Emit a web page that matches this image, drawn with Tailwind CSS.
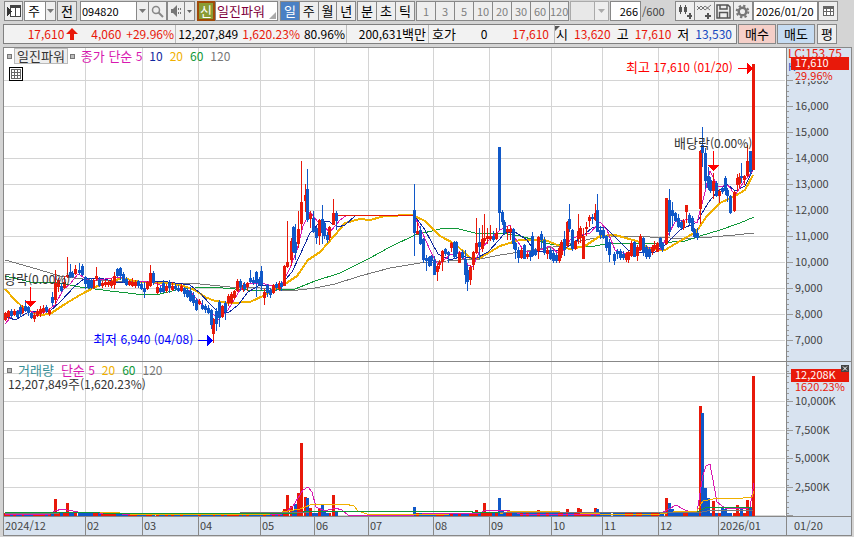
<!DOCTYPE html>
<html lang="ko">
<head>
    <meta charset="UTF-8">
    <meta name="viewport" content="width=device-width, initial-scale=1.0">
    <title>일진파워 - 종합차트</title>
    <script src="https://cdn.jsdelivr.net/npm/@tailwindcss/browser@4"></script>
</head>
<body class="min-h-screen overflow-hidden bg-[#d4d4d4] font-['Noto_Sans_CJK_KR',sans-serif] text-[13px] leading-4 text-black">

    <!-- 툴바 -->
    <header class="flex h-[21px] items-stretch whitespace-nowrap pt-px pl-1">
        <button aria-label="패널" class="flex w-[19px] items-center justify-center border border-[#888] bg-[#eee]">
            <svg width="15" height="14" viewBox="0 0 15 14" shape-rendering="crispEdges"><path d="M4 1h10v11H4z" fill="#fff" stroke="#444"/><path d="M4 2h10v2H4zM9 2h1v10H9z" fill="#444"/><path d="M1 3v9l5-4z" fill="#333"/></svg>
        </button>
        <div class="relative ml-px w-8">
            <select aria-label="종목구분" class="h-full w-full appearance-none border border-[#888] bg-white pl-[3px]"><option>주</option></select>
            <span class="pointer-events-none absolute inset-y-px right-px flex w-2.5 items-center justify-center border-l border-[#888] bg-[#eee]"><svg width="7" height="4"><path d="M0 0h7L3.500 4z" fill="#777"/></svg></span>
        </div>
        <button class="ml-px w-5 border border-[#888] bg-[#e6e6e6]">전</button>
        <input aria-label="종목코드" value="094820" class="ml-[3px] w-[57px] border border-[#888] bg-white pl-px text-[11px]">
        <button aria-label="종목코드 목록" class="flex w-[11px] items-center justify-center border-y border-[#888] bg-[#eee]"><svg width="7" height="4"><path d="M0 0h7L3.500 4z" fill="#777"/></svg></button>
        <button aria-label="검색" class="flex w-[19px] items-center justify-center border border-[#888] bg-[#eee]">
            <svg width="13" height="13" viewBox="0 0 13 13" fill="none" stroke="#888"><circle cx="5" cy="5" r="3.500" stroke-width="1.500"/><path d="M7.500 7.500L12 12" stroke-width="2"/></svg>
        </button>
        <button aria-label="음성" class="flex w-[18px] items-center justify-center border border-[#888] bg-[#eee]">
            <svg width="13" height="12" viewBox="0 0 13 12" fill="#777"><path d="M1 4h2l4-4v12L3 8H1z"/><path d="M8 3h1v2H8zM10 3h1v2h-1zM8 7h1v2H8zM10 7h1v2h-1z"/></svg>
        </button>
        <button aria-label="음성 설정" class="flex w-[10px] items-center justify-center border-y border-r border-[#888] bg-[#eee]"><svg width="5" height="3"><path d="M0 0h5L2.500 3z" fill="#666"/></svg></button>
        <button class="ml-0.5 w-[18px] border-2 border-[#a04a08] bg-[#8a9c34] text-white">신</button>
        <button class="relative w-[63px] border border-[#888] bg-white pl-px text-left text-[#80003c]">일진파워<svg class="absolute right-px bottom-px" width="7" height="7"><path d="M7 0v7H0z" fill="#aaa"/></svg></button>

        <div class="ml-0.5 flex w-[76px] divide-x divide-[#888] border border-[#888] bg-[#eee]">
            <button class="flex-1 bg-[#4a80c4] text-white">일</button>
            <button class="flex-1">주</button>
            <button class="flex-1">월</button>
            <button class="flex-1">년</button>
        </div>
        <div class="ml-px flex w-[58px] divide-x divide-[#888] border border-[#888] bg-[#eee]">
            <button class="flex-1">분</button>
            <button class="flex-1">초</button>
            <button class="flex-1">틱</button>
        </div>
        <div class="ml-px flex w-[153px] divide-x divide-[#888] border border-[#888] bg-[#eee] text-[11px] text-[#808080]">
            <button class="w-0 flex-1">1</button>
            <button class="w-0 flex-1">3</button>
            <button class="w-0 flex-1">5</button>
            <button class="w-0 flex-1">10</button>
            <button class="w-0 flex-1">20</button>
            <button class="w-0 flex-1">30</button>
            <button class="w-0 flex-1">60</button>
            <button class="w-0 flex-1">120</button>
        </div>
        <div class="relative ml-px w-[39px]">
            <select aria-label="주기" disabled class="h-full w-full appearance-none border border-[#aaa] bg-[#e8e8e8]"><option></option></select>
            <span class="pointer-events-none absolute inset-y-px right-px flex w-3.5 items-center justify-center border-l border-[#aaa] bg-[#eee]"><svg width="7" height="4"><path d="M0 0h7L3.500 4z" fill="#aaa"/></svg></span>
        </div>
        <input aria-label="표시 개수" value="266" class="ml-px w-[31px] border border-[#888] bg-white pr-0.5 text-right text-[11px]">
        <span class="w-[34px] self-center pl-px text-[11px] text-[#444]">/600</span>
        <div class="flex w-[78px] divide-x divide-[#888] border border-[#888] bg-[#eee]">
            <button aria-label="캔들" class="flex flex-1 items-center justify-center"><svg width="15" height="15" viewBox="0 0 15 15" shape-rendering="crispEdges" fill="#555"><path d="M1 3h3v5H1zM2 1h1v9H2zM6 3h3v5H6zM7 1h1v9H7zM9 11h5v2H9zM11 9h2v6h-2z"/></svg></button>
            <button aria-label="지표" class="flex flex-1 items-center justify-center"><svg width="15" height="15" viewBox="0 0 15 15" fill="none" stroke="#555"><path d="M0 6l4-4 4 4 6-5M0 2l4 4 4-4 5 4" stroke-width=".8"/><path d="M8 12h6M11 9v6" stroke-width="2"/></svg></button>
            <button aria-label="저장" class="flex flex-1 items-center justify-center"><svg width="15" height="15" viewBox="0 0 15 15" fill="none" stroke="#555" stroke-width="1.500"><path d="M1 1h11l2 2v11H1zM4 1v4h7V1M3.500 14V8.500h8V14"/></svg></button>
            <button aria-label="설정" class="flex flex-1 items-center justify-center"><svg width="15" height="15" viewBox="0 0 15 15" fill="none" stroke="#777"><circle cx="7.500" cy="7.500" r="3.800" stroke-width="2.500"/><circle cx="7.500" cy="7.500" r="5.800" stroke-width="2" stroke-dasharray="2.300 2.250"/></svg></button>
        </div>
        <input aria-label="기준일" value="2026/01/20" class="w-[65px] border border-[#888] bg-white pl-0.5 text-[11px]">
        <button aria-label="달력" class="flex w-5 items-center justify-center border border-[#888] bg-[#eee]">
            <svg width="11" height="10" viewBox="0 0 11 10" shape-rendering="crispEdges"><path d="M0 0h11v10H0z" fill="#666"/><path d="M1 3h2v2H1zM4 3h3v2H4zM8 3h2v2H8zM1 6h2v3H1zM4 6h3v3H4zM8 6h2v3H8z" fill="#fff"/></svg>
        </button>
    </header>

    <!-- 시세 -->
    <section class="mt-[3px] flex h-5 pl-[3px] whitespace-nowrap">
        <div class="flex w-[734px] items-center border border-[#808080] bg-[#f2f2f2] text-[12px]">
            <div class="flex h-full w-[172px] items-center justify-end gap-[5px] border-r border-[#bbb] pr-px text-[#e8190a]">
                <span class="flex items-center gap-0.5">17,610<svg width="12" height="12"><path d="M6 0l6 6H8v6H4V6H0z" fill="#e8190a"/></svg></span>
                <span class="ml-2">4,060</span>
                <span>+29.96%</span>
            </div>
            <div class="flex h-full w-[171px] items-center justify-end gap-1 border-r border-[#bbb] pr-px">
                <span>12,207,849</span>
                <span class="text-[#e8190a]">1,620.23%</span>
                <span>80.96%</span>
            </div>
            <div class="flex h-full w-[82px] items-center justify-end border-r border-[#bbb] pr-0.5">200,631<span class="text-[13px]">백만</span></div>
            <div class="flex h-full w-[126px] items-center justify-between border-r border-[#bbb] pr-[5px] pl-[3px]">
                <span class="text-[13px]">호가</span>
                <span>0</span>
                <span class="text-[#e8190a]">17,610</span>
            </div>
            <div class="relative flex h-full flex-1 items-center justify-between pr-1 pl-px">
                <svg class="absolute top-px left-0" width="5" height="5"><path d="M0 0h5L0 5z" fill="#555"/></svg>
                <span class="text-[13px]">시</span>
                <span class="text-[#e8190a]">13,620</span>
                <span class="text-[13px]">고</span>
                <span class="text-[#e8190a]">17,610</span>
                <span class="text-[13px]">저</span>
                <span class="text-[#1448c0]">13,530</span>
            </div>
        </div>
        <button class="ml-px w-[38px] border border-[#888] bg-[#f5cfc8]">매수</button>
        <button class="ml-px w-[38px] border border-[#888] bg-[#c6dcf2]">매도</button>
        <button class="ml-0.5 w-5 border border-[#888] bg-[#eee]">평</button>
    </section>

    <!-- 차트 -->
    <main class="mt-[3px] mr-0.5 ml-[3px] border border-[#888] bg-white">
        <div class="flex h-[468px]">
            <div class="relative min-w-0 flex-1">
                <svg id="plot" class="block h-full w-full" viewBox="4 48 782 468" preserveAspectRatio="none" shape-rendering="crispEdges" fill="none">
                    <path stroke="#d4d4d4" d="M4 80.500H785M4 106.500H785M4 132.500H785M4 158.500H785M4 184.500H785M4 210.500H785M4 236.500H785M4 262.500H785M4 288.500H785M4 314.500H785M4 340.500H785M4 373.500H785M4 401.500H785M4 430.500H785M4 458.500H785M4 487.500H785M4 515.500H785"/>
                    <path stroke="#d4d4d4" d="M85.500 48V516M142.500 48V516M198.500 48V516M260.500 48V516M314.500 48V516M368.500 48V516M433.500 48V516M489.500 48V516M551.500 48V516M602.500 48V516M658.500 48V516M718.500 48V516"/>
                    <path stroke="#888" d="M4 361.500H786"/>
                    <g id="averages" stroke-linejoin="round">
                        <polyline stroke="#777" points="5,260 30,267 60,276 90,280 110,281 160,283 200,284 230,287 260,288 290,291 315,288 335,284 360,276 390,268 420,263 460,260 480,259 500,255 520,252 560,246 590,239 610,236 650,237 670,238 695,238 712,237 735,235 754,233"/>
                        <polyline stroke="#109838" points="5,276 30,282 60,283 80,287 110,291 145,295 160,294 180,289 210,287 260,291 295,289 315,281 340,273 370,258 390,247 415,235 440,229 455,228 475,233 500,233 520,236 550,244 590,247 605,244 640,243 660,243 685,241 700,236 720,230 740,223 754,217"/>
                        <polyline stroke="#f0b000" stroke-width="2" points="5,289 15,300 25,309 32,312 40,315 50,314 65,304 80,295 95,287 110,282 122,278 140,282 165,283 180,285 195,290 205,297 215,301 230,303 250,302 265,295 285,284 297,276 308,260 320,252 335,235 345,223 360,219 370,220 385,216 412,215 425,221 440,236 455,244 465,253 470,258 480,258 490,252 500,246 520,240 545,240 560,246 570,249 585,246 600,236 615,235 640,242 650,249 665,250 680,241 696,232 707,216 720,203 735,196 745,190 753,175"/>
                        <polyline stroke="#1028a0" points="5,316 15,320 22,316 30,311 50,311 60,302 75,286 85,278 100,278 120,283 160,281 190,285 200,293 210,304 218,312 228,313 238,305 248,292 260,285 280,286 292,272 300,255 310,233 320,222 328,221 338,227 345,225 355,216 414,215 425,230 438,254 450,260 462,256 475,259 488,252 500,239 505,232 515,232 527,240 535,252 550,251 562,250 575,242 592,228 605,227 615,237 628,250 640,253 655,252 665,245 680,230 697,222 708,203 717,192 727,184 735,191 745,186 753,170"/>
                        <polyline stroke="#d818b0" points="5,324 15,312 25,309 35,313 45,312 55,305 63,290 70,284 78,274 90,281 120,277 130,283 150,281 165,287 190,291 200,303 210,310 218,320 228,310 240,290 250,283 262,283 275,287 283,282 290,268 297,250 303,226 310,212 318,222 330,232 340,220 347,215 414,215 422,232 430,250 438,265 450,255 460,252 468,265 473,267 480,250 490,239 500,230 510,225 515,238 525,252 540,250 550,246 560,255 570,240 578,236 590,233 600,222 607,230 615,250 630,255 640,250 650,247 660,250 668,235 675,222 690,219 697,223 703,200 710,171 718,187 728,185 735,195 745,180 753,171"/>
                    </g>
                    <path stroke="#e8190a" d="M337 215.500H413"/>
                    <path id="up" fill="#e8190a"/>
                    <path id="down" fill="#1058c8"/>
                    <g>
                        <polyline stroke="#d818b0" points="5,514 50,514 55,511 62,509 78,512 120,514 280,515 287,511 293,506 298,498 303,490 308,487 312,492 316,507 325,511 335,508 342,510 348,515 414,515 430,513 480,513 486,510 510,511 520,514 660,514 669,509 676,505 683,509 690,512 697,512 703,475 706,466 710,464 717,502 725,508 745,509 750,507 754,483"/>
                        <polyline stroke="#f0b000" points="5,514 76,512 110,512 130,514 270,514 300,509 310,505 330,504 345,504 354,506 358,511 370,515 450,514 500,514 510,511 540,511 600,514 660,514 680,511 697,511 703,501 718,498 735,499 752,497 754,491"/>
                        <polyline stroke="#109838" points="5,512 70,512 100,513 290,514 310,511 465,511 480,513 600,512 697,512 705,508 753,507"/>
                        <polyline stroke="#777" points="5,514 60,513 240,513 310,512 500,512 697,513 712,510 753,510"/>
                    </g>
                    <!-- 최고/최저, 배당락 화살표 -->
                    <path fill="#f00" d="M738 68h9v-5l6 5.500-6 5.500v-5h-9zM30 287h1v14h5l-5.500 6-5.500-6h5zM713 151h1v14h5l-5.500 6-5.500-6h5z"/>
                    <path fill="#00f" d="M198 340h9v-5l6 5.500-6 5.500v-5h-9z"/>
                </svg>

                <!-- 범례 -->
                <div class="absolute top-0 left-[3px] flex items-center">
                    <span class="size-[5px] border border-[#777] bg-[#bbb]"></span>
                    <span class="mx-0.5 border border-[#bbb] bg-[#eee] px-0.5 leading-[14px] text-[#333]">일진파워</span>
                    <span class="size-[5px] border border-[#777] bg-[#bbb]"></span>
                    <div class="ml-1.5 flex items-baseline gap-[7px] text-[12px]">
                        <span class="text-[#d818b0]"><span class="text-[13px]">종가 단순</span> 5</span>
                        <span class="text-[#1028a0]">10</span>
                        <span class="text-[#f0b000]">20</span>
                        <span class="text-[#109838]">60</span>
                        <span class="text-[#777]">120</span>
                    </div>
                </div>
                <button aria-label="표 보기" class="absolute top-[19px] left-[5px] size-3.5 border border-black bg-white p-px">
                    <svg width="10" height="10" shape-rendering="crispEdges"><path d="M.5.500h9v9h-9zM0 3.500h10M0 6.500h10M3.500 0v10M6.500 0v10" fill="none" stroke="#666"/></svg>
                </button>
                <div class="absolute top-[11px] right-[6.800%] text-[12px] text-[#f00]"><span class="text-[13px]">최고</span> 17,610 (01/20)</div>
                <div class="absolute top-[283px] left-[11.400%] text-[12px] text-[#00f]"><span class="text-[13px]">최저</span> 6,940 (04/08)</div>
                <div class="absolute top-[223px] left-0 text-[12px] text-[#333]"><span class="text-[13px]">당락</span>(0.00%)</div>
                <div class="absolute top-[87px] right-[4.300%] text-[12px] text-[#333]"><span class="text-[13px]">배당락</span>(0.00%)</div>

                <div class="absolute top-[314px] left-[3px] flex items-center">
                    <span class="size-[5px] border border-[#777] bg-[#bbb]"></span>
                    <div class="ml-1.5 flex items-baseline gap-[7px] text-[12px]">
                        <span class="text-[13px] text-[#389098]">거래량</span>
                        <span class="text-[#d818b0]"><span class="text-[13px]">단순</span> 5</span>
                        <span class="text-[#f0b000]">20</span>
                        <span class="text-[#109838]">60</span>
                        <span class="text-[#777]">120</span>
                    </div>
                </div>
                <div class="absolute top-[328px] left-1 text-[12px] text-[#333]">12,207,849<span class="text-[13px]">주</span>(1,620.23%)</div>
            </div>

            <!-- 가격축 -->
            <svg id="axis" class="block h-full w-[65px] shrink-0 border-l border-[#888] bg-[#d8e3f0]" viewBox="787 48 64 468" font-size="11" fill="#444">
                <path id="ticks" stroke="#999" fill="none" shape-rendering="crispEdges"/>
                <path stroke="#888" d="M787 361.500h64" shape-rendering="crispEdges"/>
                <g id="labels"></g>
                <path d="M793 70h56v11h-56z" fill="#d8e3f0"/>
                <text x="788" y="58" font-size="12" fill="#e8190a">LC:153.75</text>
                <text x="788" y="71" fill="#1058c8">H</text>
                <text x="795" y="80" fill="#e8190a">29.96%</text>
                <path d="M791 57h58v13h-58zM791 369h58v13h-58z" fill="#e8190a"/>
                <text x="795" y="67" fill="#fff">17,610</text>
                <text x="795" y="379" fill="#fff">12,208K</text>
                <text x="795" y="391" fill="#e8190a">1620.23%</text>
                <path d="M841 365h8v7h-8z" fill="#444"/>
                <path d="M843 366.500l4 4m0-4l-4 4" stroke="#fff"/>
            </svg>
        </div>

        <!-- 날짜축 -->
        <div class="flex h-[19px] border-t border-[#888] bg-[#d8e3f0] text-[11px] leading-4 text-[#444]">
            <div class="grid flex-1 grid-cols-[81fr_57fr_56fr_62fr_54fr_54fr_65fr_56fr_62fr_51fr_56fr_60fr_68fr] whitespace-nowrap">
                <span class="pl-px">2024/12</span>
                <span class="border-l border-[#888] pl-px">02</span>
                <span class="border-l border-[#888] pl-px">03</span>
                <span class="border-l border-[#888] pl-px">04</span>
                <span class="border-l border-[#888] pl-px">05</span>
                <span class="border-l border-[#888] pl-px">06</span>
                <span class="border-l border-[#888] pl-px">07</span>
                <span class="border-l border-[#888] pl-px">08</span>
                <span class="border-l border-[#888] pl-px">09</span>
                <span class="border-l border-[#888] pl-px">10</span>
                <span class="border-l border-[#888] pl-px">11</span>
                <span class="border-l border-[#888] pl-px">12</span>
                <span class="border-l border-[#888] pl-px">2026/01</span>
            </div>
            <span class="w-[65px] border-l border-[#888] pl-[7px]">01/20</span>
        </div>
    </main>

    <script>
        // 봉 데이터: x, 고가, 몸통 위, 몸통 아래, 저가
        const upCandles = [
            [5,312,313,319,320],[8,310,311,316,318],[14,309,311,314,315],[22,305,308,312,313],[34,312,315,318,321],[37,309,311,315,316],[40,306,309,313,316],[43,305,308,311,313],[49,308,310,313,315],
            [55,270,283,299,303],[58,278,280,286,291],[64,276,282,287,288],[67,257,275,276,277],[75,265,269,273,274],[93,279,280,287,288],[96,267,276,278,280],[102,281,283,285,287],[105,280,282,284,286],[108,280,282,284,286],[111,278,281,285,287],[114,272,276,284,288],
            [129,280,281,284,285],[132,278,282,285,286],[135,280,282,285,287],[147,281,282,288,289],[150,265,273,285,286],[157,282,287,292,293],[166,284,286,290,292],[172,282,286,289,290],[181,284,286,290,291],[199,299,301,303,304],
            [213,318,319,333,342],[222,305,306,316,317],[228,294,296,302,305],[231,292,294,302,303],[234,290,291,297,298],[237,279,281,290,291],[243,283,285,289,291],[247,282,283,286,290],[264,289,292,297,304],[273,284,285,292,293],[279,281,283,288,290],
            [284,265,266,285,285],[287,221,262,266,267],[291,238,241,259,265],[298,211,229,243,247],[301,161,202,223,229],[305,184,195,200,211],[310,211,214,218,227],[319,219,220,235,244],[329,226,227,237,240],[333,199,213,224,224],
            [417,222,231,233,234],[437,264,266,271,280],[439,260,262,264,268],[442,250,251,261,270],[451,242,243,247,251],[459,251,253,262,262],[470,265,267,279,284],[473,251,252,264,269],[476,218,243,252,253],[482,225,239,248,251],[484,214,238,240,243],[487,228,236,238,243],[490,225,236,238,240],[496,228,233,238,239],
            [507,226,229,231,239],[510,226,229,231,239],[521,248,250,257,258],[527,252,254,256,258],[538,236,237,250,258],[547,248,250,253,258],[559,246,248,260,262],[561,240,242,254,257],[567,221,222,245,246],[575,240,241,248,249],[578,214,231,238,243],[580,226,228,237,242],[583,228,236,258,258],[586,222,227,228,235],[589,215,217,220,226],[595,204,213,219,220],
            [626,252,254,259,261],[628,251,252,259,262],[631,241,243,255,256],[637,245,247,255,260],[640,234,236,249,250],[652,245,247,251,254],[654,241,245,248,250],[657,242,243,251,251],[666,198,198,243,244],[683,219,221,227,229],[686,205,205,211,222],
            [700,150,151,208,223],[713,173,181,190,198],[719,189,191,195,202],[734,191,192,210,211],[737,174,178,184,190],[739,173,177,183,187],[744,175,176,179,184],[747,145,161,175,176],[753,64,64,169,169]
        ];
        const downCandles = [
            [11,309,311,315,317],[17,310,311,316,317],[20,305,307,313,316],[25,300,306,310,311],[28,306,307,312,315],[31,312,313,317,318],[46,305,307,310,312],[52,292,297,302,305],[61,283,286,290,291],[70,264,272,276,277],[72,271,273,276,277],[79,263,270,272,274],[82,264,266,274,275],[85,276,277,283,288],[88,278,280,287,288],[91,278,280,287,288],[99,277,280,285,286],
            [117,268,269,275,276],[120,267,268,275,279],[123,272,274,281,282],[126,277,279,284,285],[138,280,281,285,287],[141,282,284,288,289],[144,282,288,291,297],[153,271,273,282,284],[160,286,288,291,292],[163,280,283,291,292],[169,280,283,287,292],[175,284,286,288,290],[178,285,288,290,291],[184,287,288,293,296],[187,288,290,296,297],[190,287,291,300,301],[193,292,295,302,305],[196,298,300,309,310],
            [202,300,305,308,309],[205,304,306,309,312],[208,305,308,312,313],[211,309,310,324,328],[216,308,311,323,330],[219,300,302,317,326],[225,301,303,311,319],[240,279,281,286,290],[244,282,284,288,290],[250,270,278,281,282],[253,277,280,282,284],[256,271,272,282,296],[259,277,279,284,285],[261,266,271,284,289],[267,284,285,292,296],[270,288,290,294,297],[276,282,284,287,290],[281,281,283,286,290],
            [293,226,227,251,252],[295,224,242,252,259],[307,169,189,219,221],[313,211,218,231,232],[316,227,228,237,243],[322,205,219,232,243],[324,222,223,235,238],[327,232,235,239,242],[336,211,213,220,229],
            [414,184,210,232,255],[420,226,230,243,244],[423,238,239,259,262],[426,255,258,260,270],[429,256,257,265,266],[431,255,256,260,265],[434,256,260,274,274],[445,248,249,253,255],[448,251,252,254,262],[454,241,242,256,258],[456,241,242,253,258],[462,250,252,257,258],[465,250,259,274,283],[467,265,270,281,290],[479,228,242,246,258],[493,231,236,239,241],
            [499,147,147,212,229],[502,210,212,221,224],[504,220,222,232,234],[513,228,229,243,248],[515,242,243,249,258],[518,247,250,257,262],[524,244,245,258,258],[530,251,252,256,260],[532,232,236,255,256],[535,248,250,254,255],[541,231,234,239,247],[544,237,240,252,254],[550,248,250,258,259],[553,250,253,260,262],[556,253,255,260,262],[564,231,239,249,255],[569,204,219,228,231],[572,229,230,248,250],
            [592,214,217,218,223],[597,194,210,231,231],[600,226,230,234,238],[603,227,230,237,238],[606,235,236,247,250],[609,239,242,254,261],[614,252,254,260,264],[617,249,251,253,258],[620,249,251,257,259],[623,251,254,257,259],[634,241,242,256,256],[643,237,238,252,255],[646,245,247,256,258],[649,247,249,256,258],[660,237,238,246,247],[662,242,243,249,251],
            [669,189,200,231,235],[672,202,210,215,225],[675,212,213,220,221],[678,214,218,226,227],[681,220,222,227,228],[689,213,215,222,224],[692,216,218,230,231],[694,228,229,236,237],[697,228,233,237,239],[702,127,145,152,166],[705,148,153,180,188],[708,167,176,187,189],[710,177,180,190,192],[716,181,183,195,196],[722,187,188,191,193],[725,176,178,190,194],[727,188,190,195,201],[730,195,196,212,213],[741,163,176,177,182],[750,151,151,171,175]
        ];
        // 거래량이 눈에 띄는 날: x → 막대 위쪽 y
        const volumes = {
            55:499, 67:503, 287:495, 291:506, 284:509, 293:511, 295:504, 298:493, 301:443, 305:497, 307:498, 310:508, 319:509, 322:505, 324:510, 333:495, 336:511,
            414:507, 476:510, 484:503, 499:498, 502:511, 538:510, 567:509, 578:508, 580:509, 595:508, 597:509, 666:498, 669:503, 672:509, 686:510,
            700:406, 702:413, 705:488, 708:498, 713:501, 722:507, 725:509, 737:505, 741:509, 747:500, 750:507, 753:376
        };
        const draw = candles => candles.map(([x, high, top, bottom, low]) => {
            const volume = volumes[x] || 513;
            return `M${x - 1} ${top}h3V${bottom + 1}h-3zM${x} ${high}h1V${low + 1}h-1zM${x - 1} ${volume}h3V516h-3z`;
        }).join('');
        document.getElementById('up').setAttribute('d', draw(upCandles));
        document.getElementById('down').setAttribute('d', draw(downCandles));

        // 축 눈금과 라벨
        let ticks = '';
        let labels = '';
        for (let y = 75; y < 360; y += 5.2) ticks += `M787 ${Math.round(y)}.5h2`;
        for (let y = 365; y < 515; y += 5.7) ticks += `M787 ${Math.round(y)}.5h2`;
        for (let i = 0; i <= 10; i++) {
            const y = 340 - i * 26;
            ticks += `M787 ${y}.5h6`;
            labels += `<text x="795" y="${y + 4}">${(7 + i)},000</text>`;
        }
        [['12,500K', 373], ['10,000K', 401], ['7,500K', 430], ['5,000K', 458], ['2,500K', 487]].forEach(([label, y]) => {
            ticks += `M787 ${y}.5h6`;
            labels += `<text x="795" y="${y + 4}">${label}</text>`;
        });
        document.getElementById('ticks').setAttribute('d', ticks + 'M787 515.5h6');
        document.getElementById('labels').innerHTML = labels;
    </script>
</body>
</html>
